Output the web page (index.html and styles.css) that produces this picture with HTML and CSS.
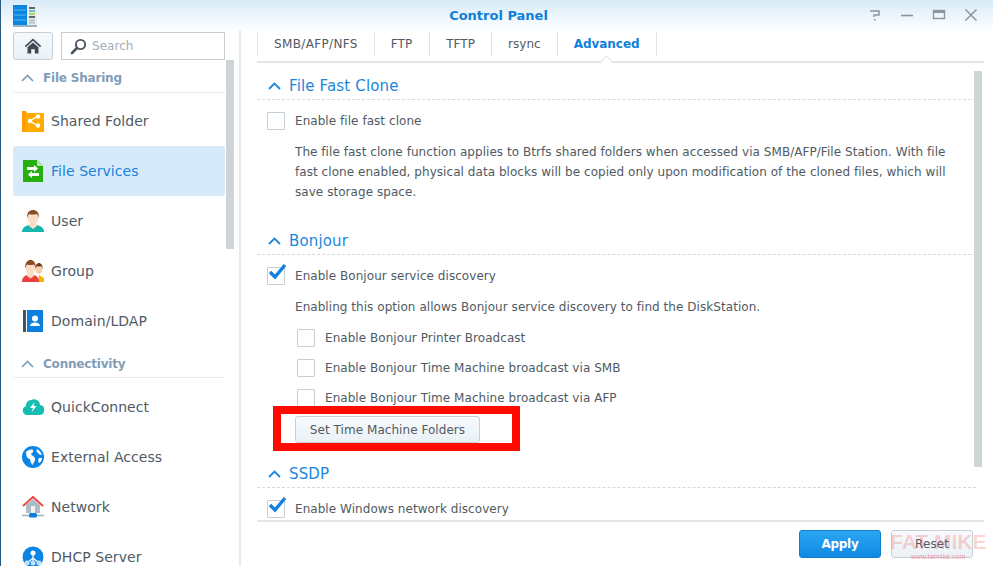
FILE: index.html
```html
<!DOCTYPE html>
<html lang="en">
<head>
<meta charset="utf-8">
<title>Control Panel</title>
<link rel="stylesheet" href="styles.css">
</head>
<body>
<div class="window">
  <header class="titlebar">
    <svg class="app-logo" width="25" height="25" viewBox="0 0 25 25">
      <rect x="0" y="0" width="14" height="20" fill="#0a86de"/>
      <path d="M1 5h12M1 10h12M1 15h12" stroke="#5ab8f2" stroke-width="1"/>
      <rect x="14" y="0" width="10" height="20" fill="#e8eef0"/>
      <path d="M16 3h6" stroke="#30363a" stroke-width="1.5"/>
      <path d="M16 6h6" stroke="#3fb0c0" stroke-width="1.5"/>
      <path d="M16 9h6" stroke="#a3c83a" stroke-width="1.5"/>
      <path d="M16 12h6" stroke="#30363a" stroke-width="1.5"/>
      <rect x="16" y="14" width="6" height="5" fill="#c6ced4"/>
      <rect x="0" y="20" width="24" height="2" fill="#9fb2c0"/>
    </svg>
    <h1 class="title">Control Panel</h1>
    <div class="win-actions">
      <svg width="14" height="14" viewBox="0 0 14 14"><path d="M2 3h9v4H6v2" fill="none" stroke="#8c959c" stroke-width="1.5"/><path d="M6 11h1.6v1.6H6z" fill="#8c959c"/></svg>
      <svg width="14" height="14" viewBox="0 0 14 14"><path d="M1 7.5h12" stroke="#8c959c" stroke-width="1.6"/></svg>
      <svg width="14" height="14" viewBox="0 0 14 14"><rect x="1.5" y="2.5" width="11" height="8" fill="none" stroke="#8c959c" stroke-width="1.4"/><rect x="1" y="2" width="12" height="3" fill="#8c959c"/></svg>
      <svg width="14" height="14" viewBox="0 0 14 14"><path d="M1.5 1.5l11 11M12.5 1.5l-11 11" stroke="#8c959c" stroke-width="1.5"/></svg>
    </div>
  </header>
  <div class="body">
    <aside class="sidebar">
      <div class="side-top">
        <button class="home-btn" aria-label="Home">
          <svg width="18" height="18" viewBox="0 0 18 18"><path d="M9 1.5L.8 9l1.1 1.2L9 3.8l7.1 6.4L17.2 9z" fill="#3f4a52"/><path d="M3.5 10.2L9 5.4l5.5 4.8V16.5h-3.7v-4.3H7.2v4.3H3.5z" fill="#3f4a52"/></svg>
        </button>
        <label class="search">
          <svg width="17" height="17" viewBox="0 0 17 17"><circle cx="10.5" cy="6.5" r="4.6" fill="none" stroke="#4b5560" stroke-width="1.9"/><path d="M7 10L2 15" stroke="#4b5560" stroke-width="2.6" stroke-linecap="round"/></svg>
          <span>Search</span>
        </label>
      </div>
      <nav class="nav">
        <div class="group-head">
          <svg class="chev" width="13" height="8" viewBox="0 0 13 8"><path d="M1 7l5.5-5.5L12 7" fill="none" stroke="#7f9db8" stroke-width="1.7"/></svg>
          <span>File Sharing</span>
        </div>
        <a class="item">
          <svg width="22" height="22" viewBox="0 0 22 22"><path d="M0 1h4l1 2h17v19H0z" fill="#ffab00"/><path d="M0 1h3v21H0z" fill="#ff9d00"/><path d="M16 6l-8 5 8 5" fill="none" stroke="#fff" stroke-width="1.4"/><circle cx="8" cy="11" r="2.2" fill="#fff"/><circle cx="16" cy="6.5" r="2.2" fill="#fff"/><circle cx="16" cy="15.5" r="2.2" fill="#fff"/></svg>
          <span>Shared Folder</span>
        </a>
        <a class="item active">
          <svg width="22" height="22" viewBox="0 0 22 22"><path d="M1 0h14l6 6v16H1z" fill="#27ae0f"/><path d="M15 0l6 6h-6z" fill="#b7e6ad"/><path d="M5 8h7v-2l4 3.500-4 3.500v-2H5zM17 14h-7v-2l-4 3.500 4 3.500v-2h7z" fill="#fff" transform="translate(0 -1)"/></svg>
          <span>File Services</span>
        </a>
        <a class="item">
          <svg width="22" height="22" viewBox="0 0 22 22"><path d="M0 22c0-4 3-6 7-7h8c4 1 7 3 7 7z" fill="#16b5ad"/><path d="M7 14h8v2l-4 3-4-3z" fill="#fbdcc4"/><ellipse cx="11" cy="7.500" rx="5.500" ry="7" fill="#fbdcc4"/><path d="M5.300 8C4.500 2 8 0 11 0s6.500 2 5.700 8c-.7-2-1-3.500-2-4-2 .7-5.500.7-7.400 0-1 .5-1.300 2-2 4z" fill="#8a4b22"/></svg>
          <span>User</span>
        </a>
        <a class="item">
          <svg width="22" height="22" viewBox="0 0 22 22"><ellipse cx="17" cy="9" rx="3.500" ry="5" fill="#f6cfae"/><path d="M13.500 9c-.5-4 2-6 3.500-6s4 2 3.500 6c-.5-1.500-1-2.500-1.500-3-1 .5-3 .5-4 0-.5.5-1 1.500-1.500 3z" fill="#6a3a1c"/><path d="M17 15l5 3v4h-6z" fill="#f5b400"/><path d="M0 22c0-4 2-6 5-7h7c3 1 5 3 5 7z" fill="#ee3f3f"/><path d="M5 14h7v2l-3.500 2.500L5 16z" fill="#fbdcc4"/><ellipse cx="8.500" cy="8" rx="5" ry="6.500" fill="#fbdcc4"/><path d="M3.300 8.500C2.500 2.500 6 0 8.500 0s6 2.500 5.200 8.500c-.7-2-1-3.500-1.800-4-2 .7-4.800.7-6.800 0-.8.500-1.100 2-1.800 4z" fill="#8a4b22"/></svg>
          <span>Group</span>
        </a>
        <a class="item">
          <svg width="22" height="22" viewBox="0 0 22 22"><rect x="1" y="0" width="3" height="22" fill="#48525a"/><rect x="5" y="0" width="16" height="22" fill="#0a7fe0"/><circle cx="13" cy="8.500" r="3" fill="#fff"/><path d="M8 16c0-2 2-3.500 5-3.500s5 1.500 5 3.500z" fill="#fff"/></svg>
          <span>Domain/LDAP</span>
        </a>
        <div class="group-head connectivity">
          <svg class="chev" width="13" height="8" viewBox="0 0 13 8"><path d="M1 7l5.500-5.500L12 7" fill="none" stroke="#7f9db8" stroke-width="1.700"/></svg>
          <span>Connectivity</span>
        </div>
        <a class="item">
          <svg width="22" height="22" viewBox="0 0 22 22"><path d="M5 19a4.500 4.500 0 0 1-1-8.800A5.500 5.500 0 0 1 9 4a6 6 0 0 1 9 5 5 5 0 0 1-1 10z" fill="#16bdb0"/><path d="M12.500 6L8 12h3l-1.500 4.500L14.500 10h-3z" fill="#fff"/></svg>
          <span>QuickConnect</span>
        </a>
        <a class="item">
          <svg width="22" height="22" viewBox="0 0 22 22"><circle cx="11" cy="11" r="11" fill="#0a85e6"/><path d="M4 6c2-2 5-3 7-2 1 2-1 3-2 4 1 2 4 2 4 5s-2 4-2.500 6C9 17 8 15 8 13c-2 0-4-2-4-7z M15 3c2 1 4 3 5 6-2 0-3-1-4-2s-2-2-1-4z M17 12h3c0 2-1 4-3 5-1-2-1-3 0-5z" fill="#fff"/></svg>
          <span>External Access</span>
        </a>
        <a class="item">
          <svg width="22" height="22" viewBox="0 0 22 22"><path d="M4 9l7-6 7 6v8H4z" fill="#aebcc6"/><path d="M1 10l10-9 10 9" fill="none" stroke="#ee4a44" stroke-width="2"/><rect x="9" y="10" width="4" height="7" fill="#f0f3f5"/><path d="M0 19.500h22" stroke="#9db0bd" stroke-width="1.500"/><rect x="7" y="17" width="8" height="4.500" rx="1.500" fill="#0a7fe0"/></svg>
          <span>Network</span>
        </a>
        <a class="item">
          <svg width="22" height="22" viewBox="0 0 22 22"><circle cx="11" cy="11" r="10.500" fill="#0a85e6"/><circle cx="11" cy="7" r="2.500" fill="#fff"/><path d="M11 9v6M5 17l6-5 6 5" stroke="#fff" stroke-width="1.300" fill="none"/><circle cx="5" cy="17" r="2.500" fill="#bfe0f8"/><circle cx="11" cy="17" r="2.500" fill="#bfe0f8"/><circle cx="17" cy="17" r="2.500" fill="#bfe0f8"/></svg>
          <span>DHCP Server</span>
        </a>
      </nav>
      <div class="scrollbar side-scroll"></div>
    </aside>
    <main class="main">
      <div class="tabs">
        <a class="tab wide">SMB/AFP/NFS</a>
        <a class="tab ftp">FTP</a>
        <a class="tab">TFTP</a>
        <a class="tab">rsync</a>
        <a class="tab selected">Advanced</a>
      </div>
      <div class="content">
        <section class="section">
          <h2 class="sec-head"><svg width="13" height="8" viewBox="0 0 13 8"><path d="M1 7l5.500-5.500L12 7" fill="none" stroke="#1b87e0" stroke-width="1.800"/></svg>File Fast Clone</h2>
          <div class="row"><i class="box"></i><span>Enable file fast clone</span></div>
          <p class="desc">The file fast clone function applies to Btrfs shared folders when accessed via SMB/AFP/File Station. With file fast clone enabled, physical data blocks will be copied only upon modification of the cloned files, which will save storage space.</p>
        </section>
        <section class="section">
          <h2 class="sec-head"><svg width="13" height="8" viewBox="0 0 13 8"><path d="M1 7l5.500-5.500L12 7" fill="none" stroke="#1b87e0" stroke-width="1.800"/></svg>Bonjour</h2>
          <div class="row"><i class="box"><svg class="tick" width="20" height="18" viewBox="0 0 20 18"><path d="M3 9l5 5L18 2" fill="none" stroke="#1280dc" stroke-width="3.400"/></svg></i><span>Enable Bonjour service discovery</span></div>
          <p class="note">Enabling this option allows Bonjour service discovery to find the DiskStation.</p>
          <div class="row sub"><i class="box"></i><span>Enable Bonjour Printer Broadcast</span></div>
          <div class="row sub"><i class="box"></i><span>Enable Bonjour Time Machine broadcast via SMB</span></div>
          <div class="row sub"><i class="box"></i><span>Enable Bonjour Time Machine broadcast via AFP</span></div>
          <button class="btn folders">Set Time Machine Folders</button>
          <div class="annotation"></div>
        </section>
        <section class="section ssdp">
          <h2 class="sec-head"><svg width="13" height="8" viewBox="0 0 13 8"><path d="M1 7l5.500-5.500L12 7" fill="none" stroke="#1b87e0" stroke-width="1.800"/></svg>SSDP</h2>
          <div class="row"><i class="box"><svg class="tick" width="20" height="18" viewBox="0 0 20 18"><path d="M3 9l5 5L18 2" fill="none" stroke="#1280dc" stroke-width="3.400"/></svg></i><span>Enable Windows network discovery</span></div>
        </section>
        <div class="scrollbar main-scroll"></div>
      </div>
      <footer class="footer">
        <button class="btn apply">Apply</button>
        <button class="btn reset">Reset</button>
        <div class="watermark">FAT MIKE<small>www.fatmike.com</small></div>
      </footer>
    </main>
  </div>
</div>
</body>
</html>
```
FILE: styles.css
```css
* { box-sizing: border-box; }
html, body { margin: 0; height: 100%; }
body { overflow: hidden; background: #fff; font-family: "DejaVu Sans", Verdana, sans-serif; font-size: 12px; letter-spacing: .05px; color: #505a64; }
.window { width: 993px; height: 566px; border-left: 1px solid #2a5a80; display: flex; flex-direction: column; overflow: hidden; background: #fff; }
.titlebar { height: 30px; flex: none; display: flex; align-items: center; padding-left: 12px; position: relative; background: linear-gradient(#d8ebf9, #fdfeff); }
.app-logo { flex: none; margin-top: 4px; }
.title { position: absolute; left: 3px; right: 0; top: 8px; margin: 0; text-align: center; font-size: 13px; line-height: 15px; font-weight: 700; letter-spacing: 0; color: #0f7fd8; }
.win-actions { margin-left: auto; margin-right: 15px; display: flex; gap: 18px; }
.body { flex: 1; display: flex; min-height: 0; }
.sidebar { width: 240px; flex: none; position: relative; padding: 2px 14px 0 12px; border-right: 2px solid #e6e9ec; overflow: hidden; }
.side-top { display: flex; gap: 8px; height: 28px; }
.home-btn { width: 40px; height: 28px; padding: 0; border: 1px solid #c5d0d9; border-radius: 3px; background: linear-gradient(#f6f9fb, #eaf1f6); display: flex; align-items: center; justify-content: center; }
.search { width: 164px; height: 28px; border: 1px solid #c6ced5; display: flex; align-items: center; gap: 5px; padding-left: 8px; color: #a4adb5; font-size: 12px; }
.nav { display: flex; flex-direction: column; }
.group-head { height: 33px; padding: 3px 0 0 8px; margin-bottom: 3px; border-bottom: 1px solid #e8ecef; display: flex; align-items: center; gap: 9px; font-size: 12px; font-weight: 700; letter-spacing: -.2px; color: #7f9db8; }
.connectivity { height: 32px; padding-top: 5px; margin-bottom: 4px; }
.chev { flex: none; }
.item { height: 50px; display: flex; align-items: center; gap: 7px; padding-left: 9px; font-size: 14px; color: #505a64; border-radius: 3px; }
.item svg { flex: none; }
.item.active { background: #d7eafa; color: #1a82d8; }
.scrollbar { position: absolute; background: #cfd4d6; width: 8px; }
.side-scroll { left: 225px; top: 30px; height: 189px; }
.main { flex: 1; min-width: 0; display: flex; flex-direction: column; padding: 2px 9px 0 16px; }
.tabs { display: flex; height: 31px; flex: none; border-bottom: 2px solid #e2e6e8; position: relative; }
.tabs::after { content: ""; position: absolute; left: 345px; bottom: -5px; width: 8px; height: 8px; background: #fff; border-left: 1px solid #dfe3e6; border-top: 1px solid #dfe3e6; transform: rotate(45deg); }
.tab { border-left: 1px solid #dfe3e6; padding: 0 16px; line-height: 25px; height: 24px; color: #505a64; white-space: nowrap; }
.tab.wide { letter-spacing: .35px; }
.tab.ftp { padding-right: 17px; }
.tab.selected { font-weight: 700; letter-spacing: -.05px; color: #0f7fd8; border-right: 1px solid #dfe3e6; }
.content { flex: 1; min-height: 0; position: relative; padding-top: 7px; overflow: hidden; border-bottom: 2px solid #e4e7e9; }
.section { padding-right: 8px; position: relative; }
.sec-head { margin: 0; height: 30px; padding: 2px 0 0 11px; border-bottom: 1px dashed #d5d9dc; display: flex; align-items: center; gap: 8px; font-size: 15px; font-weight: 400; letter-spacing: .15px; color: #1b87e0; }
.sec-head svg { flex: none; }
.row { height: 30px; display: flex; align-items: center; gap: 10px; padding-left: 10px; }
.box { width: 18px; height: 18px; flex: none; border: 1px solid #c6ced5; border-radius: 1px; position: relative; background: #fff; }
.tick { position: absolute; left: -1px; top: -5px; }
.section > .row:first-of-type { margin-top: 6px; }
.desc { margin: 6px 30px 0 38px; line-height: 20px; }
.section + .section { margin-top: 23px; }
.note { margin: 6px 0 6px 38px; line-height: 20px; }
.sub { padding-left: 40px; }
.btn { font-family: inherit; font-size: 12px; letter-spacing: .05px; border-radius: 3px; border: 1px solid #c5d0d9; background: linear-gradient(#f8fafc, #eaf1f6); color: #505a64; }
.folders { display: block; margin: 3px 0 0 38px; height: 27px; width: 185px; padding: 0; }
.annotation { position: absolute; left: 16px; top: 181px; width: 247px; height: 45px; border: 8px solid #fe0b00; }
.section.ssdp { margin-top: 15px; }
.main-scroll { left: 717px; top: 8px; height: 396px; }
.footer { height: 44px; flex: none; display: flex; justify-content: flex-end; align-items: flex-start; gap: 10px; padding: 8px 11px 0 0; position: relative; }
.apply { width: 82px; height: 28px; padding: 0; border: 1px solid #0f7fd0; background: linear-gradient(#2ba6f3, #1089e3); color: #fff; font-weight: 700; letter-spacing: -.3px; }
.reset { width: 82px; height: 28px; padding: 0; }
.watermark { position: absolute; right: -2px; top: 9px; width: 96px; font-family: "Liberation Sans", Arial, sans-serif; font-size: 21px; line-height: 22px; font-weight: 700; letter-spacing: 0; color: rgba(240, 60, 60, .22); text-align: center; white-space: nowrap; }
.watermark small { display: block; font-size: 7px; line-height: 7px; font-weight: 400; color: rgba(240, 60, 60, .5); }
```
